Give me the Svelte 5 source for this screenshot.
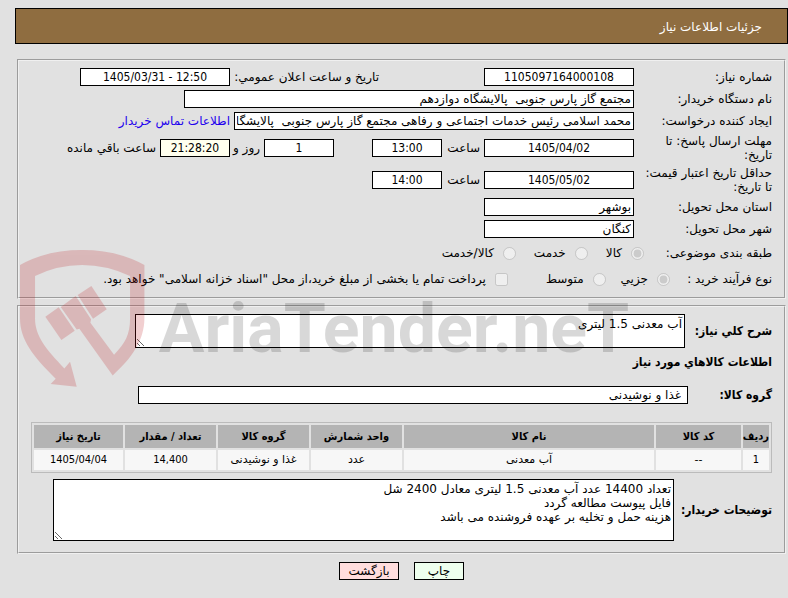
<script>
	const columns = [
		{ title: "ردیف", key: "row", size: "index" },
		{ title: "کد کالا", key: "code", size: "code" },
		{ title: "نام کالا", key: "name", size: "rest" },
		{ title: "واحد شمارش", key: "unit", size: "mid" },
		{ title: "گروه کالا", key: "group", size: "mid" },
		{ title: "تعداد / مقدار", key: "amount", size: "mid" },
		{ title: "تاریخ نیاز", key: "date", size: "date" },
	];

	const numeric = ["row", "amount", "date"];

	const items = [
		{
			row: "1",
			code: "--",
			name: "آب معدنی",
			unit: "عدد",
			group: "غذا و نوشیدنی",
			amount: "14,400",
			date: "1405/04/04",
		},
	];

	let summary = "آب معدنی 1.5 لیتری";
	let notes = "تعداد 14400 عدد آب معدنی 1.5 لیتری معادل 2400 شل\nفایل پیوست مطالعه گردد\nهزینه حمل و تخلیه بر عهده فروشنده می باشد";
</script>

<main class="page" dir="rtl" lang="fa">
	<h1>جزئیات اطلاعات نیاز</h1>

	<fieldset class="details">
		<div class="row">
			<label class="name" for="number">شماره نیاز:</label>
			<input class="medium center" id="number" type="text" value="1105097164000108" readonly />
			<label class="announce" for="announced">تاریخ و ساعت اعلان عمومي:</label>
			<input class="medium center" id="announced" type="text" dir="ltr" value="1405/03/31 - 12:50" readonly />
		</div>
		<div class="row">
			<label class="name" for="buyer">نام دستگاه خریدار:</label>
			<input class="wide" id="buyer" type="text" value="مجتمع گاز پارس جنوبی  پالایشگاه دوازدهم" readonly />
		</div>
		<div class="row">
			<label class="name" for="creator">ایجاد کننده درخواست:</label>
			<input class="long" id="creator" type="text" value="محمد اسلامی رئیس خدمات اجتماعی و رفاهی مجتمع گاز پارس جنوبی  پالایشگاه دوازدهم" readonly />
			<a href="#contact">اطلاعات تماس خریدار</a>
		</div>
		<div class="row tall">
			<label class="name" for="deadline">مهلت ارسال پاسخ: تا تاریخ:</label>
			<input class="medium center" id="deadline" type="text" value="1405/04/02" readonly />
			<label class="hour" for="deadline-hour">ساعت</label>
			<input class="short center" id="deadline-hour" type="text" value="13:00" readonly />
			<input class="short center days" id="days" type="text" value="1" readonly />
			<label class="and" for="days">روز و</label>
			<input class="short center left" id="left" type="text" value="21:28:20" readonly />
			<label for="left">ساعت باقي مانده</label>
		</div>
		<div class="row tall">
			<label class="name" for="validity">حداقل تاریخ اعتبار قیمت: تا تاریخ:</label>
			<input class="medium center" id="validity" type="text" value="1405/05/02" readonly />
			<label class="hour" for="validity-hour">ساعت</label>
			<input class="short center" id="validity-hour" type="text" value="14:00" readonly />
		</div>
		<div class="row">
			<label class="name" for="province">استان محل تحویل:</label>
			<input class="medium" id="province" type="text" value="بوشهر" readonly />
		</div>
		<div class="row">
			<label class="name" for="city">شهر محل تحویل:</label>
			<input class="medium" id="city" type="text" value="کنگان" readonly />
		</div>
		<div class="row choices" role="radiogroup" aria-labelledby="kind">
			<span class="name" id="kind">طبقه بندی موضوعی:</span>
			<label><input type="radio" name="kind" checked disabled /> کالا</label>
			<label><input type="radio" name="kind" disabled /> خدمت</label>
			<label><input type="radio" name="kind" disabled /> کالا/خدمت</label>
		</div>
		<div class="row choices process" role="radiogroup" aria-labelledby="process">
			<span class="name" id="process">نوع فرآیند خرید :</span>
			<label><input type="radio" name="process" checked disabled /> جزیي</label>
			<label><input type="radio" name="process" disabled /> متوسط</label>
			<label class="treasury"><input type="checkbox" disabled /> پرداخت تمام یا بخشی از مبلغ خرید،از محل "اسناد خزانه اسلامی" خواهد بود.</label>
		</div>
	</fieldset>

	<fieldset class="goods">
		<div class="line">
			<label for="summary">شرح کلي نیاز:</label>
			<textarea class="summary" id="summary" readonly>{summary}</textarea>
		</div>
		<h2>اطلاعات کالاهاي مورد نیاز</h2>
		<div class="line group">
			<label for="group">گروه کالا:</label>
			<input id="group" type="text" value="غذا و نوشیدنی" readonly />
		</div>
		<table>
			<thead>
				<tr>
					{#each columns as column}
						<th class={column.size}>{column.title}</th>
					{/each}
				</tr>
			</thead>
			<tbody>
				{#each items as item}
					<tr>
						{#each columns as column}
							<td class:number={numeric.includes(column.key)}>{item[column.key]}</td>
						{/each}
					</tr>
				{/each}
			</tbody>
		</table>
		<div class="line notes">
			<label for="notes">توضیحات خریدار:</label>
			<textarea id="notes" readonly>{notes}</textarea>
		</div>
	</fieldset>

	<div class="actions">
		<button class="print" type="button">چاپ</button>
		<button class="back" type="button">بازگشت</button>
	</div>

	<svg class="watermark" viewBox="0 0 1880 430" aria-hidden="true">
		<g class="shield">
			<path d="M30 75Q110 30 216 30Q322 30 403 75V235C403 300 365 355 308 406L208 266L200 268L152 201L197 168L243 238L241 248L312 344C345 310 360 285 360 235V108Q290 75 216 75Q142 75 75 108V235C75 290 110 330 163 385L180 365L200 440L122 432L137 416C70 350 30 300 30 235Z" />
			<path d="M106 230L146 202L194 272L154 300Z" />
			<path d="M203 165L244 138L290 208L249 236Z" />
		</g>
		<text x="446" y="336">AriaTender.neT</text>
	</svg>
</main>

<style>
	:global(body) {
		background: #e1e1e1;
	}

	.page {
		position: relative;
		padding: 8px 0 18px 15px;
		font: 12px/14px Tahoma, "DejaVu Sans", sans-serif;
		color: #000;
	}

	h1 {
		margin: 0 0 15px;
		padding: 11px 25px 9px;
		border: 1px solid #000;
		background: #8f6d40;
		color: #fff;
		font-size: 12px;
		font-weight: normal;
		line-height: 14px;
	}

	fieldset {
		min-width: 0;
		margin: 0 2px 6px;
		padding: 5px 12px;
		border: 2px groove #f0f0f0;
	}

	input,
	textarea,
	button {
		box-sizing: border-box;
		border: 1px solid #000;
		border-radius: 0;
		font: inherit;
		color: inherit;
	}

	input[type="text"] {
		height: 18px;
		padding: 0 2px;
		background: #fff;
	}

	.row {
		display: flex;
		align-items: center;
		gap: 4px;
		height: 22px;
		white-space: nowrap;
	}

	.tall {
		height: 32px;
	}

	.name {
		flex: none;
		box-sizing: border-box;
		width: 134px;
		white-space: normal;
	}

	.medium {
		width: 150px;
	}

	.wide {
		width: 450px;
	}

	.long {
		width: 400px;
	}

	.short {
		width: 70px;
	}

	.center,
	.number,
	th {
		font-family: Tahoma, "DejaVu Sans Condensed", "DejaVu Sans", sans-serif;
	}

	.center {
		text-align: center;
	}

	.announce {
		width: 145px;
		margin-right: 101px;
	}

	.hour {
		width: 34px;
	}

	.and {
		width: 26px;
	}

	.days {
		margin-right: 34px;
	}

	input.left {
		background: #ffffee;
	}

	a {
		color: #2200ee;
		text-decoration: none;
	}

	.choices {
		height: 26px;
		gap: 18px;
	}

	.choices .name {
		width: 110px;
		white-space: nowrap;
	}

	.process {
		gap: 15px;
	}

	.process .name {
		width: 87px;
	}

	.choices label {
		display: flex;
		align-items: center;
		gap: 9px;
	}

	.process .treasury {
		margin-right: 23px;
	}

	.choices input {
		width: 13px;
		height: 13px;
		margin: 0;
	}

	.line {
		display: flex;
		align-items: center;
		gap: 4px;
	}

	.line label,
	h2 {
		font: bold 12px/14px Tahoma, "DejaVu Sans Condensed", "DejaVu Sans", sans-serif;
	}

	.line label {
		flex: none;
		width: 83px;
	}

	h2 {
		margin: 7px 0 17px;
	}

	textarea {
		display: block;
		margin: 0;
		padding: 2px;
		background: #fff;
	}

	.goods {
		padding: 7px 12px 11px;
	}

	.summary {
		width: 550px;
		height: 34px;
	}

	.group label {
		width: 80px;
	}

	.group input {
		width: 550px;
		padding: 0 6px;
	}

	table {
		width: 100%;
		margin: 18px 0 6px;
		border: 1px solid #bbb;
		border-collapse: separate;
		border-spacing: 2px;
		table-layout: fixed;
		font-size: 11px;
		line-height: 14px;
		text-align: center;
	}

	th {
		height: 23px;
		padding: 0;
		background: #b4b4b4;
		white-space: nowrap;
	}

	td {
		height: 20px;
		padding: 0;
		background: #f7f7f7;
	}

	.index {
		width: 26px;
	}

	.code {
		width: 85px;
	}

	.mid {
		width: 91px;
	}

	.rest {
		width: 250px;
	}

	.notes label {
		width: 94px;
	}

	.notes textarea {
		width: 621px;
		height: 62px;
	}

	.actions {
		display: flex;
		justify-content: center;
		gap: 15px;
		margin-top: 8px;
	}

	button {
		height: 18px;
		padding: 0;
	}

	.print {
		width: 50px;
		background: #eeffee;
	}

	.back {
		width: 60px;
		background: #ffdddd;
	}

	.watermark {
		position: absolute;
		top: 240px;
		left: 10px;
		width: 627px;
		overflow: visible;
		pointer-events: none;
	}

	.shield {
		fill: #be1419;
		opacity: 0.2;
	}

	.watermark text {
		direction: ltr;
		fill: #000;
		opacity: 0.15;
		font: bold 204px Roboto, sans-serif;
	}
</style>
